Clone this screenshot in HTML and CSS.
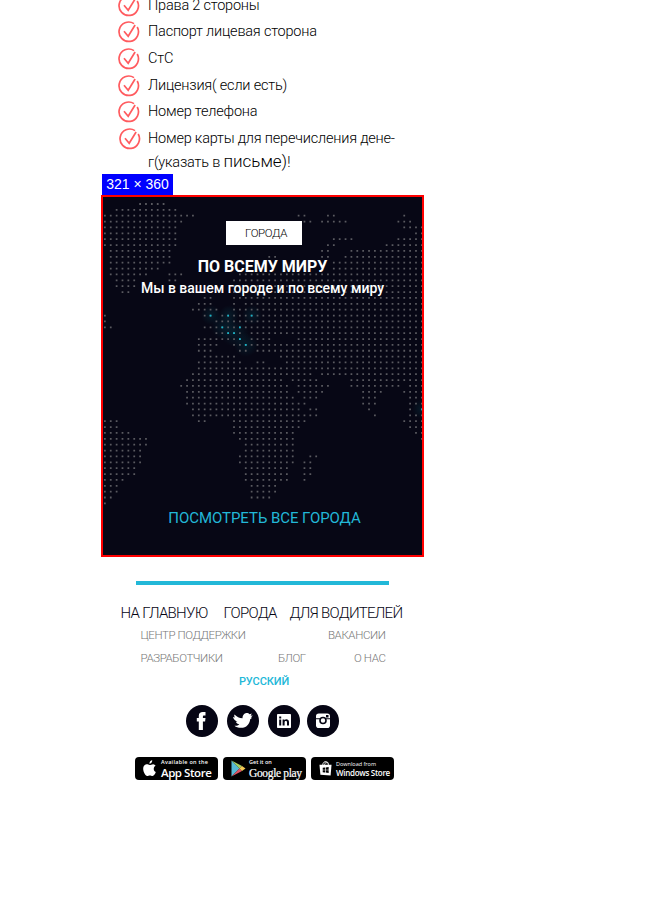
FILE: index.html
```html
<!DOCTYPE html>
<html lang="ru">
<head>
<meta charset="utf-8">
<title>По всему миру</title>
<link rel="stylesheet" href="styles.css">
</head>
<body>
<svg class="defs" width="0" height="0">
  <symbol id="check" viewBox="0 0 22 22"><path d="M16 2.600A9.700 9.700 0 1 0 19.200 6M6 10.200l4.200 5.100L17.100 4" fill="none" stroke="#ff5b5f" stroke-width="1.700"/></symbol>
</svg>
<main class="page">
  <ul class="docs">
    <li><svg class="tick"><use href="#check"/></svg><span>Права 2 стороны</span></li>
    <li><svg class="tick"><use href="#check"/></svg><span>Паспорт лицевая сторона</span></li>
    <li><svg class="tick"><use href="#check"/></svg><span>СтС</span></li>
    <li><svg class="tick"><use href="#check"/></svg><span>Лицензия( если есть)</span></li>
    <li><svg class="tick"><use href="#check"/></svg><span>Номер телефона</span></li>
    <li class="last"><svg class="tick"><use href="#check"/></svg><span>Номер карты для перечисления дене-<br>г(указать в <big>письме)</big>!</span></li>
  </ul>
  <div class="size">321 × 360</div>
  <section class="world">
    <svg class="map" width="319" height="358" viewBox="0 0 319 358">
      <defs><radialGradient id="glow"><stop offset="0" stop-color="#078c99" stop-opacity=".15"/><stop offset="1" stop-color="#078c99" stop-opacity="0"/></radialGradient></defs>
      <g fill="url(#glow)"><circle cx="108" cy="118" r="10"/><circle cx="126" cy="118" r="10"/><circle cx="149" cy="118" r="10"/><circle cx="121" cy="130" r="13"/><circle cx="132" cy="136" r="14"/><circle cx="143" cy="148" r="12"/><circle cx="319" cy="212" r="10"/></g>
      <g transform="translate(1 7) scale(5.87)" fill="none" stroke-width=".3" stroke-dasharray=".3 .7">
        <path stroke="#5a5a60" d="M6 0h4.3M2 1h10.3M0 2h15.3M33 2h1.3M38 2h1.3M51 2h.3M0 3h13.3M34 3h1.3M37 3h4.3M50 3h2.3M0 4h12.3M51 4h3.3M0 5h12.3M53 5h1.3M0 6h12.3M39 6h3.3M50 6h4.3M0 7h12.3M38 7h1.3M48 7h6.3M1 8h10.3M37 8h1.3M42 8h12.3M1 9h10.3M28 9h1.3M37 9h1.3M41 9h13.3M1 10h10.3M39 10h15.3M1 11h8.3M39 11h15.3M1 12h6.3M11 12h2.3M23 12h31.3M2 13h3.3M11 13h1.3M22 13h32.3M2 14h3.3M22 14h32.3M3 15h1.3M22 15h32.3M17 16h1.3M22 16h32.3M16 17h2.3M22 17h.3M24 17h30.3M15 18h4.3M22 18h32.3M0 19h.3M17 19h1.3M20 19h34.3M0 20h.3M19 20h35.3M0 21h1.3M17 21h37.3M19 22h4.3M25 22h29.3M16 23h7.3M25 23h3.3M33 23h21.3M16 24h3.3M22 24h32.3M16 25h2.3M23 25h1.3M26 25h28.3M17 26h5.3M30 26h24.3M16 27h7.3M26 27h1.3M31 27h23.3M16 28h38.3M15 29h20.3M37 29h17.3M14 30h16.3M32 30h4.3M42 30h12.3M13 31h18.3M33 31h5.3M42 31h8.3M52 31h2.3M14 32h17.3M33 32h4.3M44 32h3.3M51 32h3.3M14 33h18.3M34 33h2.3M44 33h2.3M52 33h2.3M14 34h20.3M44 34h2.3M52 34h2.3M15 35h18.3M35 35h1.3M45 35h.3M52 35h.3M54 35h.3M15 36h18.3M34 36h2.3M46 36h.3M52 36h2.3M0 37h2.3M16 37h1.3M22 37h12.3M51 37h3.3M0 38h2.3M22 38h11.3M52 38h2.3M0 39h4.3M22 39h10.3M53 39h1.3M0 40h7.3M23 40h9.3M54 40h.3M0 41h7.3M24 41h8.3M0 42h6.3M24 42h8.3M0 43h6.3M23 43h9.3M35 43h1.3M0 44h6.3M23 44h9.3M34 44h1.3M0 45h5.3M24 45h7.3M34 45h1.3M0 46h5.3M24 46h7.3M34 46h1.3M0 47h3.3M24 47h7.3M34 47h.3M0 48h2.3M25 48h4.3M0 49h2.3M25 49h4.3M0 50h1.3M25 50h3.3M0 51h.3"/>
        <path stroke="#12b6cb" d="M18 19h.3M21 19h.3M25 19h.3M20 21h.3M23 21h.3M21 22h1.3M23 23h.3M24 24h.3M54 35h.3"/>
      </g>
    </svg>
    <div class="tag">ГОРОДА</div>
    <h2>ПО ВСЕМУ МИРУ</h2>
    <p>Мы в вашем городе и по всему миру</p>
    <a class="all">ПОСМОТРЕТЬ ВСЕ ГОРОДА</a>
  </section>
  <footer>
    <div class="rule"></div>
    <nav class="main-nav"><a>НА ГЛАВНУЮ</a><a>ГОРОДА</a><a>ДЛЯ ВОДИТЕЛЕЙ</a></nav>
    <nav class="sub-nav"><a>ЦЕНТР ПОДДЕРЖКИ</a><a>ВАКАНСИИ</a></nav>
    <nav class="sub-nav"><a>РАЗРАБОТЧИКИ</a><a class="blog">БЛОГ</a><a>О НАС</a></nav>
    <div class="lang">РУССКИЙ</div>
    <div class="social">
      <svg viewBox="0 0 32 32"><circle cx="16" cy="16" r="16"/><path fill="#fff" d="M12.800 25v-8.400H10.800v-3.500h2v-2.300C12.800 8.200 14.300 7 16.700 7h2.800v3.500h-1.400c-.9 0-1.200.4-1.200 1.200v1.400h2.600l-.4 3.500h-2.200V25z"/></svg>
      <svg viewBox="0 0 32 32"><circle cx="16" cy="16" r="16"/><path fill="#fff" d="M7.500 9.500c2.400 2.400 4.600 3.600 8 3.800 0-3.200 2-5.300 4.200-5.300 1.300 0 2.200.5 2.900 1.300l2.200-.7-1.200 2.100 2.200-.2-2 2 1.400.3-2 1.400C22.700 19 19.500 22.800 14 22.800c-2.800 0-5-.8-6.500-2.100 2.200.1 3.600-.3 4.900-1.300-1.900-.3-3-1.200-3.500-2.600h1.600C8.700 16 6.300 14.200 6 12l2 .6c-.8-1-1-2-.5-3.100z"/></svg>
      <svg viewBox="0 0 32 32"><circle cx="16" cy="16" r="16"/><rect x="9" y="9" width="14" height="14" rx=".8" fill="#fff"/><path d="M11.200 14.400h2v6h-2zM11.200 11.500h2v1.900h-2zM14.600 14.400h1.900v.8c1.200-1.600 4.500-1.200 4.500 1.800v3.400h-2v-3c0-2-2.400-1.900-2.400 0v3h-2z"/></svg>
      <svg viewBox="0 0 32 32"><circle cx="16" cy="16" r="16"/><rect x="9" y="8.500" width="14" height="14.500" rx="2.800" fill="#fff"/><path d="M9 13.200h4.200v1H9zm9.800 0H23v1h-4.200zM19 10h2.500v2.400H19z"/><circle cx="16" cy="15.500" r="3" fill="#fff" stroke="#060514" stroke-width="1.600"/></svg>
    </div>
    <div class="stores">
      <div class="store"><svg class="apple" viewBox="0 0 13 17"><path fill="#fff" d="M9.200.3C7.500.5 6.300 2 6.500 3.700 8.100 3.600 9.400 2 9.200.3zM10.200 4.200C8.700 4.200 7.700 5 6.700 5S4.800 4.200 3.500 4.300C1.200 4.500 0 6.700.2 9.300.4 12 2.300 16 4.200 16c1 0 1.500-.6 2.700-.6s1.600.6 2.600.6c1.500 0 2.900-2.600 3.300-4-2.700-1.200-2.700-4.800-.2-6.200-.6-1-1.400-1.500-2.400-1.600z"/></svg><div class="a-text"><small>Available on the</small><b>App Store</b></div></div>
      <div class="store"><svg class="play" viewBox="0 0 15 17"><path fill="#55b9d5" d="M.5.5L8.500 8.500.5 16.500z"/><path fill="#a4cf62" d="M.5.5L11 6 8.500 8.500z"/><path fill="#e05262" d="M.5 16.500l8-8L11 11z"/><path fill="#f3c956" d="M11 6l3.500 2.500L11 11 8.500 8.500z"/></svg><div class="g-text"><small>Get it on</small><b>Google play</b></div></div>
      <div class="store"><svg class="win" viewBox="0 0 14 17"><path fill="none" stroke="#fff" d="M4 5C4 2 6 .7 8 1.200S10.200 3 10 5M6 4.500C6 2.500 8 1.700 9.500 2.500"/><path fill="#fff" d="M.5 4.500h13l-1 11.500-11-.8z"/><path d="M4 7.800l2.500-.3v2.300H4zm3.200-.4l3.200-.4v2.800H7.200zM4 10.500h2.500v2.300L4 12.500zm3.200 0h3.200v2.800l-3.200-.4z"/></svg><div class="w-text"><small>Download from</small><b>Windows Store</b></div></div>
    </div>
  </footer>
</main>
</body>
</html>
```
FILE: styles.css
```css
* { box-sizing: border-box; }
body { margin: 0; height: 912px; overflow: hidden; background: #fff; font-family: Roboto, sans-serif; color: #000; }
.defs { display: block; }
.page { width: 323px; margin-left: 101px; }
.docs { list-style: none; margin: 0; padding: 0 0 0 17px; height: 174px; font-size: 14.500px; letter-spacing: -.2px; font-weight: 300; display: flex; flex-direction: column; }
.docs li { display: flex; gap: 8px; height: 26.700px; flex: none; line-height: 24px; white-space: nowrap; }
.docs li:first-child { margin-top: -7px; }
.docs span { padding-top: .6px; }
.docs .last { height: 50px; padding-left: 1px; gap: 7px; }
.docs big { font-size: 17px; line-height: 20px; letter-spacing: 0; }
.tick { width: 22px; height: 22px; margin-top: 1.500px; flex: none; }
.size { width: 71px; height: 21px; margin-left: 1px; background: #00f; color: #fff; font: 14px/20px "Liberation Sans", sans-serif; text-align: center; white-space: nowrap; }
.world { position: relative; height: 362px; border: 2px solid #f00; background: #070715; color: #fff; display: flex; flex-direction: column; align-items: center; padding-top: 24px; white-space: nowrap; }
.map { position: absolute; inset: 0; }
.world > :not(.map) { z-index: 1; }
.tag { width: 76px; height: 24px; margin-left: 3px; padding-left: 4px; background: #fff; color: #000; font-size: 11.500px; letter-spacing: -.35px; font-weight: 300; line-height: 25px; text-align: center; }
h2 { margin: 11px 0 0; font-size: 16px; line-height: 22px; font-weight: 700; }
.world p { margin: -1px 0 0; font-size: 14px; font-weight: 500; line-height: 22px; }
.all { margin-top: 208px; margin-left: 4px; color: #22b8d8; font-size: 15px; letter-spacing: -.06px; line-height: 22px; }
footer { padding-top: 24px; white-space: nowrap; }
.rule { width: 253px; height: 4px; margin-left: 35px; background: #22b8d8; }
.main-nav { display: flex; width: 282px; margin: 17px 0 0 19.500px; color: #060514; font-size: 15px; letter-spacing: -.7px; font-weight: 300; line-height: 22px; }
.main-nav a:nth-child(1) { width: 103px; }
.main-nav a:nth-child(2) { width: 66px; }
.sub-nav { display: flex; justify-content: space-between; width: 245px; height: 23px; margin-left: 39.500px; color: #777; font-size: 11.500px; letter-spacing: -.4px; font-weight: 300; line-height: 23px; }
.blog { margin-left: 7px; }
.lang { padding-left: 3px; color: #22b8d8; font-size: 11px; font-weight: 500; letter-spacing: -.1px; line-height: 23px; text-align: center; }
.social { display: flex; gap: 9px; margin: 12px 0 0 85px; fill: #060514; }
.social svg { width: 32px; height: 32px; }
.social svg:last-child { margin-left: -2px; }
.stores { display: flex; gap: 5px; margin: 20px 0 0 34px; }
.store { width: 83px; height: 23px; border-radius: 4px; background: #000; color: #fff; display: flex; align-items: center; gap: 5px; padding-left: 8px; font-family: "Open Sans", sans-serif; }
.store svg { flex: none; width: 13px; height: 17px; }
.store .play { width: 15px; }
.store div { display: flex; flex-direction: column; }
.store small { font-size: 5.500px; line-height: 9px; }
.store b { font-size: 11.500px; line-height: 12px; font-weight: 600; letter-spacing: -.45px; }
.a-text small { font-weight: 600; letter-spacing: .28px; }
.store .g-text { margin-left: -2px; }
.g-text small { font-weight: 600; }
.store .g-text b { font: 500 11.500px/12px "Liberation Serif", serif; letter-spacing: -.35px; -webkit-text-stroke: .2px #fff; }
.store .w-text { margin-left: -1px; }
.w-text small { line-height: 8px; }
.store .w-text b { font-size: 8px; line-height: 9px; letter-spacing: -.3px; }
```
